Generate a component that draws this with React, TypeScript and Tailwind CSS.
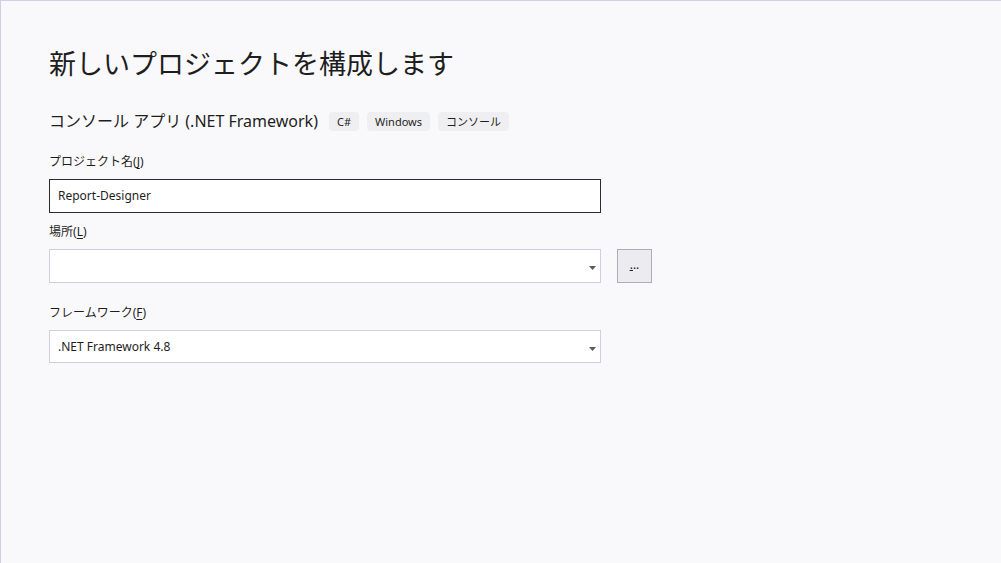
import { ReactNode } from 'react';

const font = { fontFamily: '"Noto Sans", "Noto Sans CJK JP", sans-serif' };

const Caret = () => (
  <svg width="7" height="4" viewBox="0 0 7 4" className="absolute right-[4px] top-[16px]">
    <path d="M0 0h7L3.5 4z" fill="#5a5a5a" />
  </svg>
);

const Label = ({ children, keyChar }: { children: ReactNode; keyChar: string }) => (
  <div className="text-[12px] leading-[16px] text-[#1e1e1e]">
    {children}(<span className="underline underline-offset-2">{keyChar}</span>)
  </div>
);

const Tag = ({ text }: { text: string }) => (
  <span className="h-[19px] px-[8px] rounded-[4px] bg-[#efeff2] text-[11px] leading-[19px] text-[#1e1e1e]">
    {text}
  </span>
);

export default function App() {
  return (
    <div
      style={font}
      className="w-[1001px] h-[563px] overflow-hidden bg-[#f9f9fb] border-t border-l border-[#cfcfe0] pl-[48px] pt-[43px] text-[#1e1e1e]"
    >
      <h1 className="text-[27px] leading-[40px] font-normal mb-[28px]">新しいプロジェクトを構成します</h1>

      <div className="flex items-center h-[19px] mb-[23px]">
        <span className="text-[16px] leading-[19px] mr-[11px]">コンソール アプリ (.NET Framework)</span>
        <div className="flex gap-[8px]">
          <Tag text="C#" />
          <Tag text="Windows" />
          <Tag text="コンソール" />
        </div>
      </div>

      <Label keyChar="J">プロジェクト名</Label>
      <div className="mt-[9px] w-[552px] h-[34px] bg-white border border-[#2b2b2b] flex items-center px-[8px] text-[12px]">
        Report-Designer
      </div>

      <div className="mt-[11px]">
        <Label keyChar="L">場所</Label>
      </div>
      <div className="mt-[9px] flex gap-[16px]">
        <div className="relative w-[552px] h-[34px] bg-white border border-[#cfcfe0]">
          <Caret />
        </div>
        <button className="w-[35px] h-[34px] bg-[#ebebf0] border border-[#adadb3] text-[12px] leading-[12px] flex items-end justify-center pb-[11px]">
          <span><span className="underline">.</span>..</span>
        </button>
      </div>

      <div className="mt-[22px]">
        <Label keyChar="F">フレームワーク</Label>
      </div>
      <div className="relative mt-[9px] w-[552px] h-[33px] bg-white border border-[#cfcfe0] flex items-center px-[8px] text-[12px]">
        .NET Framework 4.8
        <Caret />
      </div>
    </div>
  );
}
